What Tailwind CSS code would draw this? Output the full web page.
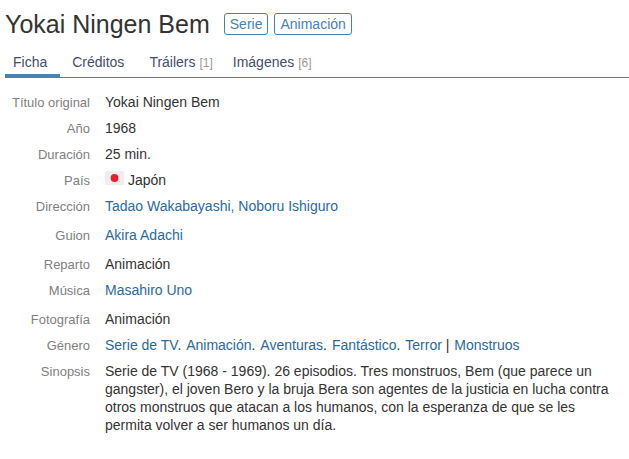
<!DOCTYPE html>
<html lang="es">
<head>
    <meta charset="UTF-8">
    <meta name="viewport" content="width=device-width, initial-scale=1.0">
    <script src="https://cdn.jsdelivr.net/npm/@tailwindcss/browser@4"></script>
    <title>Yokai Ningen Bem</title>
</head>
<body class="bg-white pl-[5px] font-['Liberation_Sans',Arial,sans-serif] text-sm leading-[18px] text-[#333]">
    <header class="flex items-center pt-2">
        <h1 class="text-[25px] leading-8">Yokai Ningen Bem</h1>
        <div class="ml-[14px] flex gap-[6px]">
            <a href="#" class="rounded-[3px] border border-[#4682b4] px-[5px] leading-5 text-[#4682b4]">Serie</a>
            <a href="#" class="rounded-[3px] border border-[#4682b4] px-[5px] leading-5 text-[#4682b4]">Animación</a>
        </div>
    </header>

    <nav class="mt-[10px] flex border-b border-[#4682b4] leading-6 text-[#444e69]">
        <a href="#" class="border-b-3 border-[#4682b4] pr-[13px] pl-2">Ficha</a>
        <a href="#" class="pr-[13px] pl-3">Créditos</a>
        <a href="#" class="pr-2 pl-3">Tráilers <span class="text-xs text-[#999]">[1]</span></a>
        <a href="#" class="px-3">Imágenes <span class="text-xs text-[#999]">[6]</span></a>
    </nav>

    <dl class="mt-[15px] grid grid-cols-[85px_1fr] gap-x-[15px] gap-y-2 pr-2 [&>dt]:pt-px [&>dt]:text-right [&>dt]:text-[13px] [&>dt]:leading-[17px] [&>dt]:text-[#808080]">
        <dt>Título original</dt>
        <dd>Yokai Ningen Bem</dd>
        <dt>Año</dt>
        <dd>1968</dd>
        <dt>Duración</dt>
        <dd>25 min.</dd>
        <dt>País</dt>
        <dd class="flex">
            <svg class="mr-1 h-[14px] w-[19px]" viewBox="0 0 19 14" role="img" aria-label="Japón">
                <rect width="19" height="14" rx="1.5" fill="#eee"/>
                <circle cx="9.5" cy="7" r="3.9" fill="#ec1c2b"/>
            </svg>
            Japón
        </dd>
        <dt>Dirección</dt>
        <dd class="pb-[3px] text-[#2a6a9c]"><a href="#">Tadao Wakabayashi</a>, <a href="#">Noboru Ishiguro</a></dd>
        <dt>Guion</dt>
        <dd class="pb-[3px]"><a href="#" class="text-[#2a6a9c]">Akira Adachi</a></dd>
        <dt>Reparto</dt>
        <dd>Animación</dd>
        <dt>Música</dt>
        <dd class="pb-[3px]"><a href="#" class="text-[#2a6a9c]">Masahiro Uno</a></dd>
        <dt>Fotografía</dt>
        <dd>Animación</dd>
        <dt>Género</dt>
        <dd class="[&>a]:text-[#2a6a9c] [&>a+a]:ml-px">
            <a href="#">Serie de TV</a>.
            <a href="#">Animación</a>.
            <a href="#">Aventuras</a>.
            <a href="#">Fantástico</a>.
            <a href="#">Terror</a> |
            <a href="#">Monstruos</a>
        </dd>
        <dt>Sinopsis</dt>
        <dd>Serie de TV (1968 - 1969). 26 episodios. Tres monstruos, Bem (que parece un gangster), el joven Bero y la bruja Bera son agentes de la justicia en lucha contra otros monstruos que atacan a los humanos, con la esperanza de que se les permita volver a ser humanos un día.</dd>
    </dl>
</body>
</html>
